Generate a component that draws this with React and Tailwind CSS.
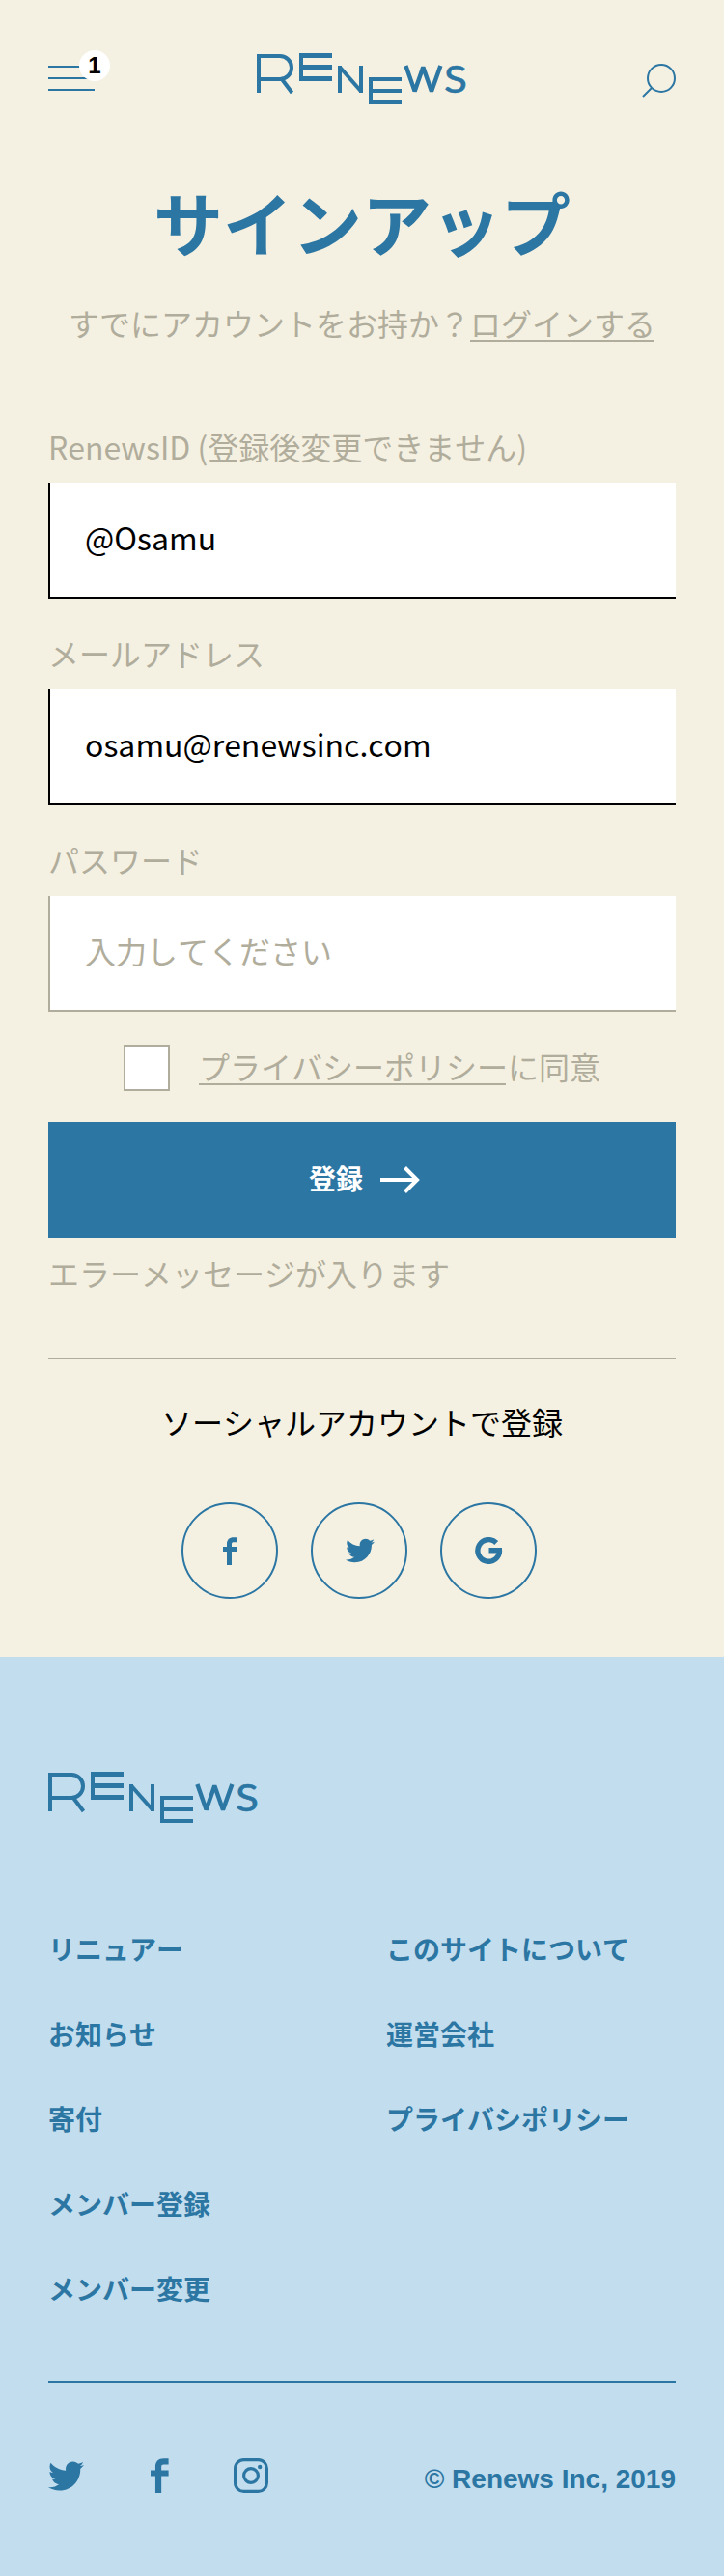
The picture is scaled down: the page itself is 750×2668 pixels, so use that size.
import React from "react";
import { FaTwitter } from "react-icons/fa";

function Logo() {
  return (
    <svg width="218" height="54" viewBox="0 0 218 54" fill="none" stroke="#2b76a3" strokeWidth="4" aria-label="Renews" className="block">
      <path d="M2 42V4H24A12 12 0 0 1 24 28H2M26 28L36.5 42" />
      <g fill="#2b76a3" stroke="none">
        <rect x="44" y="1" width="4" height="29" />
        <rect x="44" y="1" width="34" height="5" />
        <rect x="44" y="13" width="34" height="5" />
        <rect x="44" y="25" width="34" height="5" />
        <rect x="116" y="26" width="4" height="28" />
        <rect x="116" y="26" width="34" height="4" />
        <rect x="116" y="38" width="34" height="4" />
        <rect x="116" y="50" width="34" height="4" />
        <rect x="84" y="14" width="4" height="28" />
        <rect x="106" y="14" width="4" height="28" />
      </g>
      <path d="M86 15.5L108 40.5" />
      <path d="M154.4 14L163.6 40.4L172.3 15.6L181 40.4L190.4 14" strokeLinejoin="bevel" strokeWidth="4.4" />
      <text transform="translate(194 41.5) scale(1.13 1)" fontFamily="Lato" fontSize="39" fill="#2b76a3" strokeWidth="0.6">S</text>
    </svg>
  );
}

function FacebookIcon({ className }) {
  return (
    <svg viewBox="0 0 15 29" className={className} fill="currentColor">
      <path d="M15 0.2H11C6.5 0.2 4 2.8 4 7V10H0V15H4V29H9V15H15V10H9V7.2C9 5.8 9.6 5.2 11 5.2H15Z" />
    </svg>
  );
}

function GoogleIcon() {
  return (
    <svg viewBox="0 0 29 28" className="h-7 w-[29px]" fill="none" stroke="currentColor" strokeWidth="5.4">
      <path d="M22.2 6A11.3 11.3 0 1 0 25.5 13.8M14.5 13.8H28" />
    </svg>
  );
}

function InstagramIcon() {
  return (
    <svg viewBox="0 0 36 36" className="size-9" fill="none" stroke="currentColor" strokeWidth="3.2">
      <rect x="1.6" y="1.6" width="32.8" height="32.8" rx="9" />
      <circle cx="18" cy="18" r="7.4" />
      <circle cx="27.2" cy="9" r="2.2" fill="currentColor" stroke="none" />
    </svg>
  );
}

function Field({ label, value, placeholder }) {
  return (
    <label className="block">
      <span className="mb-3.5 block text-[32px] leading-[48px] text-[#b1ad9c]">{label}</span>
      <span
        className={
          "flex h-[120px] items-center border-b-2 border-l-2 bg-white pb-[7px] pl-9 text-[32px] " +
          (value ? "border-black text-black" : "border-[#b1ad9c] text-[#b1ad9c]")
        }
      >
        {value || placeholder}
      </span>
    </label>
  );
}

function SocialButton({ children }) {
  return (
    <button className="flex size-[100px] items-center justify-center rounded-full border-2 border-[#2b76a3]">{children}</button>
  );
}

const primaryLinks = ["リニュアー", "お知らせ", "寄付", "メンバー登録", "メンバー変更"];
const secondaryLinks = ["このサイトについて", "運営会社", "プライバシポリシー"];

export default function App() {
  return (
    <div
      lang="ja"
      className="flex h-[2668px] w-[750px] flex-col bg-[#f5f1e2] font-['Noto_Sans_CJK_JP',sans-serif] text-[#2b76a3] [font-kerning:none]"
    >
      <header className="flex items-start justify-between px-[50px] pt-[54px]">
        <button className="relative mt-3.5 flex w-12 flex-col gap-2.5">
          <span className="h-0.5 w-12 bg-[#2b76a3]" />
          <span className="h-0.5 w-12 bg-[#2b76a3]" />
          <span className="h-0.5 w-12 bg-[#2b76a3]" />
          <span className="absolute -top-4 left-8 flex size-8 items-center justify-center rounded-full bg-white font-['Liberation_Sans',sans-serif] text-2xl font-bold text-black">
            1
          </span>
        </button>
        <div className="ml-[168px]">
          <Logo />
        </div>
        <svg width="36" height="36" viewBox="0 0 36 36" fill="none" stroke="#2b76a3" strokeWidth="2" className="ml-auto mt-3">
          <circle cx="21" cy="15" r="14" />
          <path d="M11 25L2 34" />
        </svg>
      </header>

      <main className="flex flex-col px-[50px]">
        <h1 className="mt-[69px] text-center text-[72px] font-bold leading-[104px]">サインアップ</h1>
        <p className="mt-[29px] h-12 whitespace-nowrap text-center text-[32px] leading-[48px] text-[#b1ad9c]">
          すでにアカウントをお持か？
          <a className="mr-0.5 inline-block w-[190px] border-b-2 border-[#b1ad9c] leading-9">ログインする</a>
        </p>

        <form className="mt-20 flex flex-col gap-8">
          <Field label="RenewsID (登録後変更できません)" value="@Osamu" />
          <Field label="メールアドレス" value="osamu@renewsinc.com" />
          <Field label="パスワード" placeholder="入力してください" />
        </form>

        <div className="mt-[34px] flex h-12 items-center pl-[78px]">
          <span className="size-12 border-2 border-[#b1ad9c] bg-white" />
          <span className="-mt-1 ml-[30px] h-12 whitespace-nowrap text-[32px] leading-[48px] text-[#b1ad9c]">
            <a className="mr-0.5 inline-block w-[318px] border-b-2 border-[#b1ad9c] leading-9">プライバシーポリシー</a>
            に同意
          </span>
        </div>

        <button className="mt-8 flex h-[120px] items-center bg-[#2b76a3] pl-[270px] text-[28px] font-bold leading-[42px] text-white">
          <span className="-mt-1">登録</span>
          <svg width="42" height="28" viewBox="0 0 42 28" fill="none" stroke="currentColor" strokeWidth="4" className="ml-[18px]">
            <path d="M0 14H38M25.5 1.5L38 14L25.5 26.5" />
          </svg>
        </button>
        <p className="mt-3 text-[32px] leading-[48px] text-[#b1ad9c]">エラーメッセージが入ります</p>

        <hr className="mt-16 border-t-2 border-[#b1ad9c]" />
        <p className="mt-10 text-center text-[32px] leading-[48px] text-black">ソーシャルアカウントで登録</p>
        <div className="mt-[60px] flex gap-[34px] pl-[138px]">
          <SocialButton>
            <FacebookIcon className="h-[29px] w-[15px]" />
          </SocialButton>
          <SocialButton>
            <FaTwitter size={30} className="ml-0.5" />
          </SocialButton>
          <SocialButton>
            <GoogleIcon />
          </SocialButton>
        </div>
      </main>

      <footer className="mt-[60px] flex grow flex-col bg-[#c2ddee] px-[50px] pt-[118px]">
        <Logo />
        <nav className="mt-[109px] flex text-[28px] font-bold leading-[42px]">
          <ul className="flex w-[350px] flex-col gap-[46px]">
            {primaryLinks.map((t) => (
              <li key={t}>{t}</li>
            ))}
          </ul>
          <ul className="flex flex-col gap-[46px]">
            {secondaryLinks.map((t) => (
              <li key={t}>{t}</li>
            ))}
          </ul>
        </nav>
        <hr className="mt-[75px] border-t-2 border-[#2b76a3]" />
        <div className="mt-[76px] flex items-center">
          <FaTwitter size={37} />
          <FacebookIcon className="ml-[69px] h-9 w-[18.6px]" />
          <span className="ml-[67px]">
            <InstagramIcon />
          </span>
          <span className="ml-auto mt-2 font-['Liberation_Sans',sans-serif] text-[28px] font-bold leading-8">© Renews Inc, 2019</span>
        </div>
      </footer>
    </div>
  );
}
